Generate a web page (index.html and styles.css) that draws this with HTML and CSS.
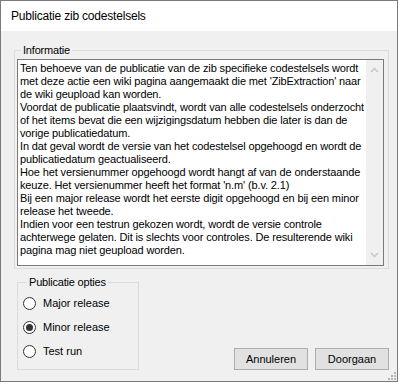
FILE: index.html
```html
<!DOCTYPE html>
<html>
<head>
    <title>Publicatie zib codestelsels</title>
    <link rel="stylesheet" href="styles.css">
</head>
<body>
    <div class="window">
        <div class="titlebar">Publicatie zib codestelsels</div>

        <div class="dialog">
            <fieldset class="group info">
                <legend>Informatie</legend>
                <div class="textbox">
                    <div class="text">
                        Ten behoeve van de publicatie van de zib specifieke codestelsels wordt<br>
                        met deze actie een wiki pagina aangemaakt die met 'ZibExtraction' naar<br>
                        de wiki geupload kan worden.<br>
                        Voordat de publicatie plaatsvindt, wordt van alle codestelsels onderzocht<br>
                        of het items bevat die een wijzigingsdatum hebben die later is dan de<br>
                        vorige publicatiedatum.<br>
                        In dat geval wordt de versie van het codestelsel opgehoogd en wordt de<br>
                        publicatiedatum geactualiseerd.<br>
                        Hoe het versienummer opgehoogd wordt hangt af van de onderstaande<br>
                        keuze. Het versienummer heeft het format 'n.m' (b.v. 2.1)<br>
                        Bij een major release wordt het eerste digit opgehoogd en bij een minor<br>
                        release het tweede.<br>
                        Indien voor een testrun gekozen wordt, wordt de versie controle<br>
                        achterwege gelaten. Dit is slechts voor controles. De resulterende wiki<br>
                        pagina mag niet geupload worden.
                    </div>
                    <div class="scrollbar">
                        <svg width="9" height="6" viewBox="0 0 9 6"><polyline points="1,5 4.5,1.5 8,5" fill="none" stroke="#c5c5c5" stroke-width="1.5"/></svg>
                        <svg width="9" height="6" viewBox="0 0 9 6"><polyline points="1,1 4.5,4.5 8,1" fill="none" stroke="#c5c5c5" stroke-width="1.5"/></svg>
                    </div>
                </div>
            </fieldset>

            <div class="bottom">
                <fieldset class="group options">
                    <legend>Publicatie opties</legend>
                    <label class="radio"><span class="dot"></span>Major release</label>
                    <label class="radio"><span class="dot checked"></span>Minor release</label>
                    <label class="radio"><span class="dot"></span>Test run</label>
                </fieldset>

                <div class="buttons">
                    <button class="btn">Annuleren</button>
                    <button class="btn">Doorgaan</button>
                </div>
            </div>
        </div>

        <svg class="grip" width="8" height="8" viewBox="0 0 8 8">
            <rect x="6" y="0" width="2" height="2" fill="#b4b4b4"/>
            <rect x="3" y="3" width="2" height="2" fill="#b4b4b4"/>
            <rect x="6" y="3" width="2" height="2" fill="#b4b4b4"/>
            <rect x="0" y="6" width="2" height="2" fill="#b4b4b4"/>
            <rect x="3" y="6" width="2" height="2" fill="#b4b4b4"/>
            <rect x="6" y="6" width="2" height="2" fill="#b4b4b4"/>
        </svg>
    </div>
</body>
</html>
```

FILE: styles.css
```css
body {
    margin: 0;
    background-color: #ffffff;
    font-family: "Liberation Sans", Arial, sans-serif;
    font-size: 11px;
    color: #000000;
}
.window {
    position: relative;
    width: 396px;
    height: 380px;
    border: 1px solid #7a7a7a;
    background-color: #f0f0f0;
    display: flex;
    flex-direction: column;
}
.titlebar {
    height: 30px;
    line-height: 30px;
    background-color: #ffffff;
    padding-left: 10px;
    font-size: 12px;
    letter-spacing: -0.2px;
}
.dialog {
    flex: 1;
    padding: 13px 8px 0 13px;
}
.group {
    margin: 0;
    border: 1px solid #dcdcdc;
    padding: 2px;
}
.group legend {
    margin-left: 4px;
    padding: 0 2px;
    line-height: 13px;
    letter-spacing: -0.2px;
}
.info {
    width: 375px;
    box-sizing: border-box;
}
.textbox {
    display: flex;
    width: 367px;
    height: 207px;
    box-sizing: border-box;
    border: 1px solid #7a7a7a;
    background-color: #ffffff;
}
.text {
    flex: 1;
    padding: 2px 0 0 2px;
    line-height: 13px;
    white-space: nowrap;
    letter-spacing: -0.13px;
    overflow: hidden;
}
.scrollbar {
    width: 17px;
    background-color: #f0f0f0;
    display: flex;
    flex-direction: column;
    justify-content: space-between;
    align-items: center;
    padding: 7px 0 7px;
}
.bottom {
    display: flex;
    align-items: flex-end;
    margin-top: 7px;
    padding-left: 3px;
}
.options {
    width: 122px;
    box-sizing: border-box;
    padding: 2px 5px 6px 5px;
}
.radio {
    display: flex;
    align-items: center;
    height: 24px;
    gap: 7px;
}
.dot {
    width: 13px;
    height: 13px;
    box-sizing: border-box;
    border: 1px solid #333333;
    border-radius: 50%;
    background-color: #ffffff;
    position: relative;
}
.dot.checked::after {
    content: "";
    position: absolute;
    left: 2px;
    top: 2px;
    width: 7px;
    height: 7px;
    border-radius: 50%;
    background-color: #333333;
}
.buttons {
    margin-left: auto;
    display: flex;
    gap: 7px;
}
.btn {
    width: 74px;
    height: 22px;
    border: 1px solid #adadad;
    background-color: #e1e1e1;
    font-family: "Liberation Sans", Arial, sans-serif;
    font-size: 11px;
    color: #000000;
    padding: 0;
}
.grip {
    position: absolute;
    right: 1px;
    bottom: 1px;
}
```
